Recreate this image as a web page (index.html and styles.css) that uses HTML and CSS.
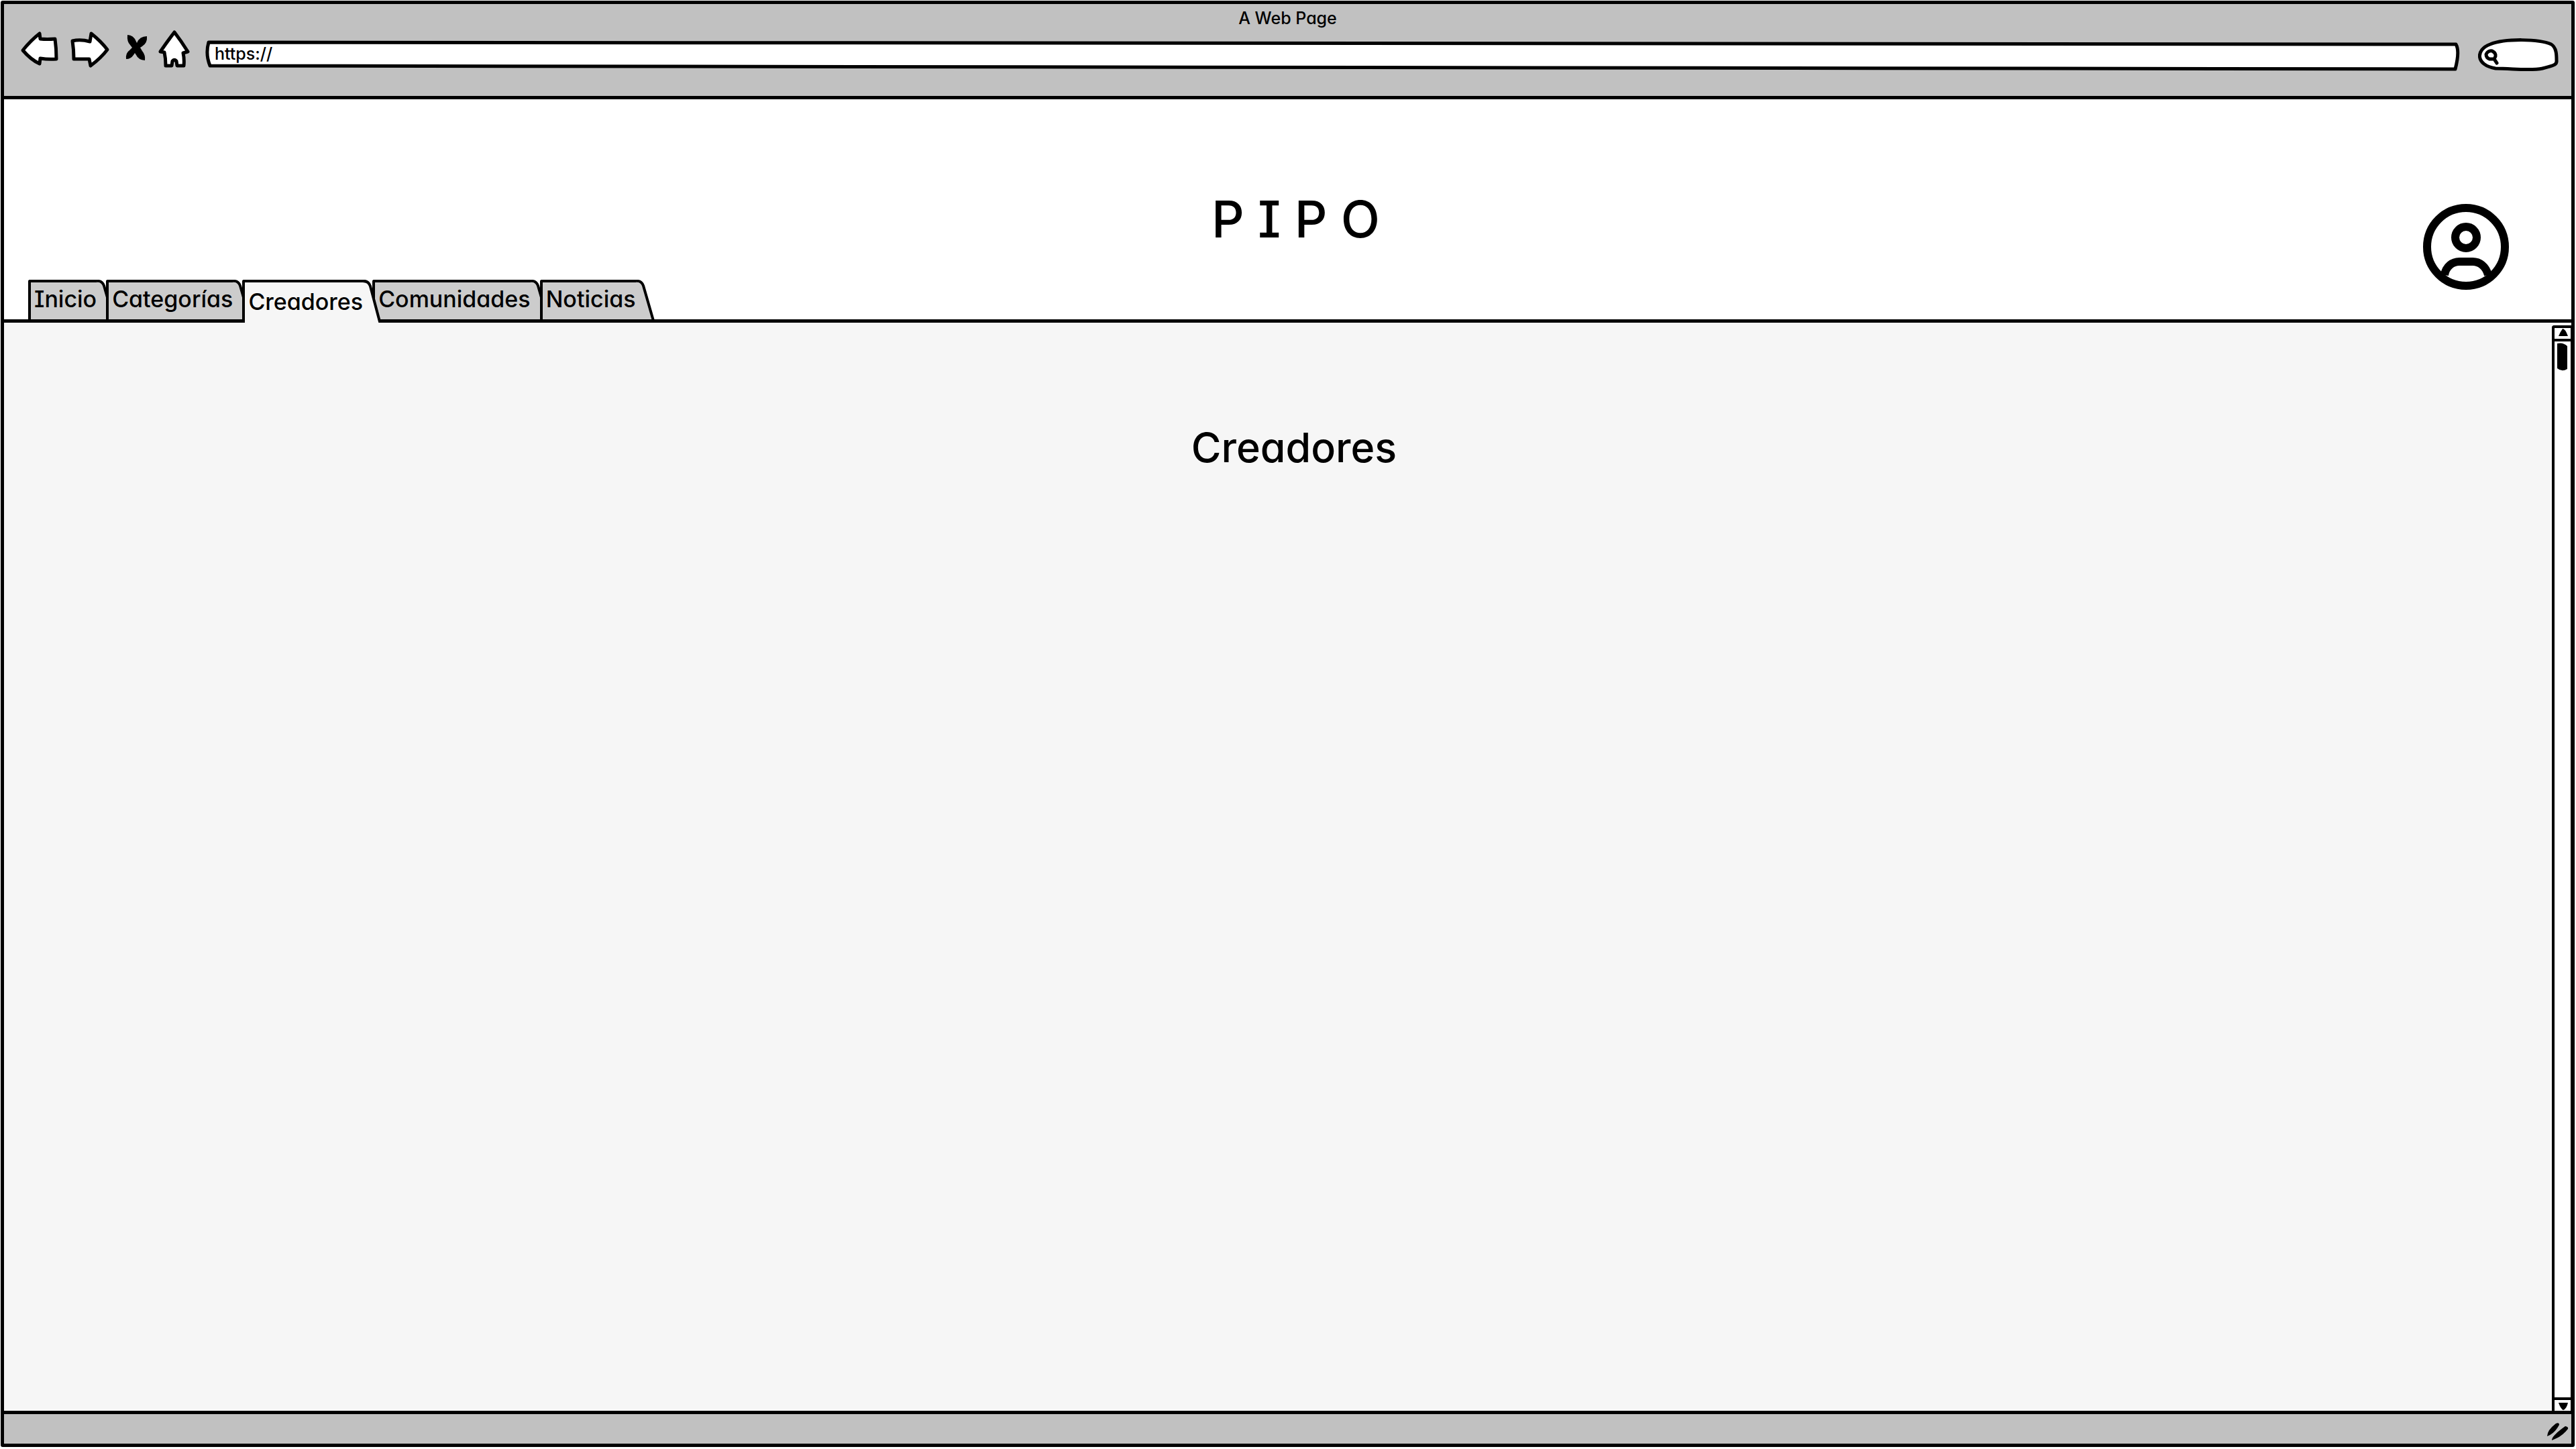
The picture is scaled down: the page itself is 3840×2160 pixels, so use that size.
FILE: index.html
```html
<!DOCTYPE html>
<html lang="es">
<head>
<meta charset="utf-8">
<meta name="viewport" content="width=device-width, initial-scale=1">
<title>A Web Page</title>
<link rel="stylesheet" href="styles.css">
</head>
<body>
<div class="window">
  <div class="toolbar">
    <div class="window-title">A Web Page</div>
    <div class="controls">
      <button class="icon-button" type="button" aria-label="Atrás">
        <svg width="58" height="64" viewBox="30 43 58 64"><path class="sketch" d="M34 75Q46 60 59 50L60 58Q70 59 82 58Q84 72 84 88Q72 89 60 87L59 95Q46 89 34 75Z"/></svg>
      </button>
      <button class="icon-button" type="button" aria-label="Adelante">
        <svg width="60" height="64" viewBox="104 43 60 64"><path class="sketch" d="M108 61Q120 58 134 62L136 50Q151 62 160 74Q150 87 135 98L133 88Q122 88 110 88Q110 74 108 61Z"/></svg>
      </button>
      <button class="icon-button" type="button" aria-label="Detener">
        <svg width="40" height="64" viewBox="180 43 40 64"><path d="M190 52Q199 52 203 62L204 64Q208 54 219 54Q220 64 212 69L209 71L212 76Q217 82 216 90Q206 89 203 82L201 79L199 82Q195 88 188 88Q187 79 193 75L197 71L194 67Q189 62 190 52Z"/></svg>
      </button>
      <button class="icon-button" type="button" aria-label="Inicio del navegador">
        <svg width="54" height="64" viewBox="236 43 54 64"><path class="sketch" d="M260 48Q270 61 280 77L273 79Q275 88 274 98H264L263 91Q260 88 257 91L256 98H247Q247 87 245 78L239 77Q250 61 260 48Z"/></svg>
      </button>
      <div class="address">
        <svg class="address-shape" viewBox="0 0 3361 64" preserveAspectRatio="none" aria-hidden="true"><path class="sketch" vector-effect="non-scaling-stroke" d="M5 20L3355 23Q3361 33 3354 60L7 55Q0 38 5 20Z"/></svg>
        <input class="address-input" type="text" value="https://" aria-label="Dirección">
      </div>
      <button class="icon-button search" type="button" aria-label="Buscar">
        <svg width="121" height="64" viewBox="3694 43 121 64"><path class="sketch" d="M3720 102C3690 97 3690 74 3712 66C3735 57 3785 58 3803 66C3811 71 3811 82 3811 90C3812 98 3803 98 3790 102C3772 106 3745 102 3720 102Z"/><path class="lens" d="M3718 88H3711Q3706 86 3706 81Q3709 75 3715 76Q3721 79 3720 84L3718 88L3722 94"/></svg>
      </button>
    </div>
  </div>

  <header class="header">
    <h1 class="brand">P I P O</h1>
    <button class="icon-button avatar" type="button" aria-label="Perfil">
      <svg width="128" height="128" viewBox="0 0 128 128"><g class="avatar-line"><circle cx="64" cy="64" r="58"/><circle cx="64" cy="50" r="16"/><path d="M32 106C34 93 44 86 54 86H74C84 86 94 93 97 106"/></g></svg>
    </button>
    <nav class="tabs">
      <a class="tab" href="#inicio"><span class="tab-label">Inicio</span><svg class="tab-edge" viewBox="0 0 28 60" preserveAspectRatio="none"><path d="M0 2Q8 1 11 9L26 62H0Z"/></svg></a>
      <a class="tab" href="#categorias"><span class="tab-label">Categorías</span><svg class="tab-edge" viewBox="0 0 28 60" preserveAspectRatio="none"><path d="M0 2Q8 1 11 9L26 62H0Z"/></svg></a>
      <a class="tab tab-active" href="#creadores" aria-current="page"><span class="tab-label">Creadores</span><svg class="tab-edge" viewBox="0 0 28 60" preserveAspectRatio="none"><path d="M0 2Q8 1 11 9L26 62H0Z"/></svg></a>
      <a class="tab" href="#comunidades"><span class="tab-label">Comunidades</span><svg class="tab-edge" viewBox="0 0 28 60" preserveAspectRatio="none"><path d="M0 2Q8 1 11 9L26 62H0Z"/></svg></a>
      <a class="tab" href="#noticias"><span class="tab-label">Noticias</span><svg class="tab-edge" viewBox="0 0 28 60" preserveAspectRatio="none"><path d="M0 2Q8 1 11 9L26 62H0Z"/></svg></a>
    </nav>
  </header>

  <div class="body">
    <main class="content" id="creadores">
      <h2 class="page-title">Creadores</h2>
    </main>
    <div class="scrollbar">
      <button class="scroll-button scroll-up" type="button" aria-label="Subir"><svg width="24" height="16" viewBox="0 4 24 16"><path d="M6 16Q9 9 12 5Q16 5 20 16Z"/></svg></button>
      <div class="scroll-track"><svg width="24" height="44" viewBox="0 0 24 44"><path d="M4 1Q13 -1 19 5V39Q11 44 4 38Z"/></svg></div>
      <button class="scroll-button scroll-down" type="button" aria-label="Bajar"><svg width="24" height="16" viewBox="0 0 24 16"><path d="M6 4H20Q18 13 13 15Q9 13 6 4Z"/></svg></button>
    </div>
  </div>

  <footer class="status">
    <svg width="36" height="32" viewBox="3795 2119 36 32"><path d="M3797 2141Q3797 2132 3810 2122Q3815 2120 3815 2124Q3808 2137 3797 2141ZM3804 2147Q3803 2141 3824 2126Q3829 2127 3828 2130Q3819 2142 3804 2147Z"/></svg>
  </footer>
</div>
</body>
</html>
```
FILE: styles.css
```css
* { box-sizing: border-box; }

body {
  margin: 0;
  background: #fff;
  color: #000;
  font-family: Inter, "Noto Sans", sans-serif;
  font-feature-settings: "cv11", "cv08";
  font-weight: 500;
}

svg { display: block; }

.window {
  display: flex;
  flex-direction: column;
  min-height: calc(100vh - 4px);
  margin: 1px 2px 3px 1px;
  border: 5px solid #000;
  border-radius: 3px;
}

.icon-button {
  flex: none;
  padding: 0;
  border: 0;
  background: none;
  cursor: pointer;
}

.sketch {
  fill: #fff;
  stroke: #000;
  stroke-width: 5px;
  stroke-linejoin: round;
}

/* Browser toolbar */
.toolbar {
  padding: 7px 18px 36px;
  background: #c1c1c1;
  border-bottom: 5px solid #000;
}

.window-title {
  font-size: 25px;
  line-height: 28px;
  text-align: center;
}

.controls {
  display: flex;
  gap: 16px;
  margin-top: 2px;
  padding-left: 6px;
}

.address {
  position: relative;
  flex: 1;
  height: 64px;
}

.address-shape {
  position: absolute;
  inset: 0;
  width: 100%;
  height: 100%;
}

.address-input {
  position: relative;
  width: 100%;
  height: 64px;
  padding: 10px 16px 0 14px;
  border: 0;
  outline: 0;
  background: none;
  color: inherit;
  font: inherit;
  font-size: 25px;
}

.search { margin-left: 11px; }

.lens {
  fill: none;
  stroke: #000;
  stroke-width: 5px;
  stroke-linecap: round;
  stroke-linejoin: round;
}

/* Site header */
.header {
  display: grid;
  grid-template-columns: 1fr auto 1fr;
  grid-template-rows: 269px auto;
  background: #fff;
  border-bottom: 5px solid #000;
}

.brand {
  grid-area: 1 / 2;
  margin: 0;
  padding: 128px 0 0 24px;
  font-size: 76px;
  font-weight: 500;
  line-height: 100px;
}

.avatar {
  grid-area: 1 / 3 / 3 / 4;
  justify-self: end;
  align-self: start;
  margin: 156px 93px 0 0;
}

.avatar-line {
  fill: none;
  stroke: #000;
  stroke-width: 12px;
}

.tabs {
  grid-area: 2 / 1;
  display: flex;
  height: 59px;
  padding-left: 36px;
}

.tab {
  position: relative;
  display: flex;
  flex: none;
  height: 59px;
  margin-right: -14px;
  color: inherit;
  font-size: 34px;
  line-height: 50px;
  text-decoration: none;
}

.tab-label {
  padding-left: 5px;
  background: #ccc;
  border-top: 4px solid #000;
  border-left: 4px solid #000;
  border-top-left-radius: 3px;
}

.tab-edge {
  width: 28px;
  height: 100%;
}

.tab-edge path {
  fill: #ccc;
  stroke: #000;
  stroke-width: 4px;
  stroke-dasharray: 70 200;
}

.tab-active {
  z-index: 1;
  height: 64px;
  line-height: 58px;
}

.tab-active .tab-label { background: #f6f6f6; }
.tab-active .tab-edge path { fill: #f6f6f6; }

/* Page body */
.body {
  display: flex;
  flex: 1;
  background: #f6f6f6;
}

.content { flex: 1; }

.page-title {
  margin: 0;
  padding: 146px 0 0 48px;
  font-size: 61px;
  font-weight: 500;
  line-height: 80px;
  text-align: center;
}

.scrollbar {
  display: flex;
  flex-direction: column;
  width: 29px;
  margin-top: 4px;
  background: #fff;
  border: 4px solid #000;
  border-width: 4px 1px 0 4px;
  border-top-left-radius: 4px;
}

.scroll-button {
  padding: 0;
  border: 0 solid #000;
  background: #fff;
}

.scroll-up { border-bottom-width: 4px; }
.scroll-down { border-top-width: 4px; }

.scroll-track {
  flex: 1;
  padding-top: 2px;
}

/* Status bar */
.status {
  display: flex;
  align-items: flex-end;
  justify-content: flex-end;
  height: 49px;
  padding: 0 2px 1px 0;
  background: #c1c1c1;
  border-top: 5px solid #000;
}
```
